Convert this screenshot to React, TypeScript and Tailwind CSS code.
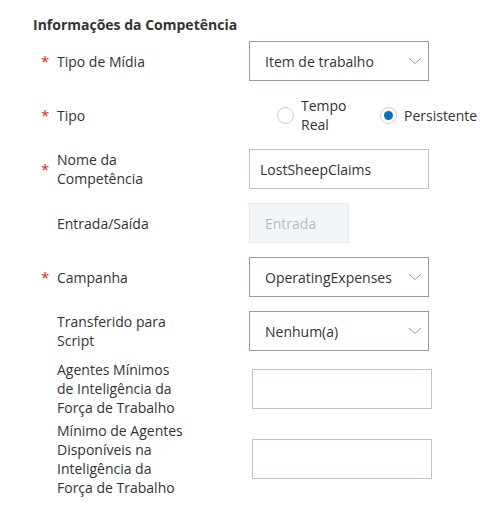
import React from "react";

const Chevron = () => (
  <svg width="14" height="8" viewBox="0 0 14 8" fill="none" className="absolute right-[6px] top-1/2 -translate-y-1/2">
    <path d="M1 1l6 5.5L13 1" stroke="#8c9bab" strokeWidth="1" />
  </svg>
);

const Select = ({ value }: { value: string }) => (
  <div className="relative flex h-[40px] w-[180px] items-center border border-[#8e9cab] bg-white pl-[15px] text-[14px] text-[#333]">
    {value}
    <Chevron />
  </div>
);

const Asterisk = ({ on }: { on?: boolean }) => (
  <span className="w-[16px] shrink-0 text-[15px] leading-none text-[#e0272b]">{on ? "*" : ""}</span>
);

const Label = ({ children, w = "w-[192px]" }: { children: React.ReactNode; w?: string }) => (
  <div className={`${w} shrink-0`}>
    <div className="max-w-[128px] text-[14px] leading-[19px] text-[#333]">{children}</div>
  </div>
);

export default function App() {
  return (
    <div className="h-[528px] w-[504px] bg-white font-['Open_Sans',sans-serif]">
      <h2 className="pl-[33px] pt-[15px] text-[14px] font-bold leading-[20px] text-[#333]">
        Informações da Competência
      </h2>

      <div className="mt-[6px] flex flex-col pl-[41px]">
        <div className="flex h-[40px] items-center">
          <Asterisk on />
          <Label>Tipo de Mídia</Label>
          <Select value="Item de trabalho" />
        </div>

        <div className="mt-[14px] flex h-[40px] items-center">
          <Asterisk on />
          <Label>Tipo</Label>
          <div className="flex items-center pl-[28px] text-[14px] text-[#333]">
            <label className="flex w-[103px] items-center">
              <span className="h-[17px] w-[17px] rounded-full border border-[#c9ced3] bg-white" />
              <span className="ml-[7px] w-[50px] leading-[19px]">Tempo Real</span>
            </label>
            <label className="flex items-center">
              <span className="flex h-[17px] w-[17px] items-center justify-center rounded-full border border-[#c9ced3] bg-white">
                <span className="h-[9px] w-[9px] rounded-full bg-[#0a6fb8]" />
              </span>
              <span className="ml-[7px]">Persistente</span>
            </label>
          </div>
        </div>

        <div className="mt-[14px] flex h-[40px] items-center">
          <Asterisk on />
          <Label>Nome da Competência</Label>
          <div className="flex h-[40px] w-[180px] items-center border border-[#b7c3cd] bg-white pl-[10px] text-[14px] text-[#333]">
            LostSheepClaims
          </div>
        </div>

        <div className="mt-[14px] flex h-[40px] items-center">
          <Asterisk />
          <Label>Entrada/Saída</Label>
          <div className="flex h-[40px] w-[100px] items-center border border-[#e3e9ee] bg-[#f3f6f9] pl-[15px] text-[14px] text-[#b3bbc3]">
            Entrada
          </div>
        </div>

        <div className="mt-[14px] flex h-[40px] items-center">
          <Asterisk on />
          <Label>Campanha</Label>
          <Select value="OperatingExpenses" />
        </div>

        <div className="mt-[14px] flex h-[40px] items-center">
          <Asterisk />
          <Label>Transferido para Script</Label>
          <Select value="Nenhum(a)" />
        </div>

        <div className="mt-[9px] flex items-center">
          <Asterisk />
          <Label w="w-[195px]">Agentes Mínimos de Inteligência da Força de Trabalho</Label>
          <div className="h-[40px] w-[180px] border border-[#b7c3cd] bg-white" />
        </div>

        <div className="mt-[4px] flex items-center">
          <Asterisk />
          <Label w="w-[195px]">Mínimo de Agentes Disponíveis na Inteligência da Força de Trabalho</Label>
          <div className="h-[40px] w-[180px] border border-[#b7c3cd] bg-white" />
        </div>
      </div>
    </div>
  );
}
